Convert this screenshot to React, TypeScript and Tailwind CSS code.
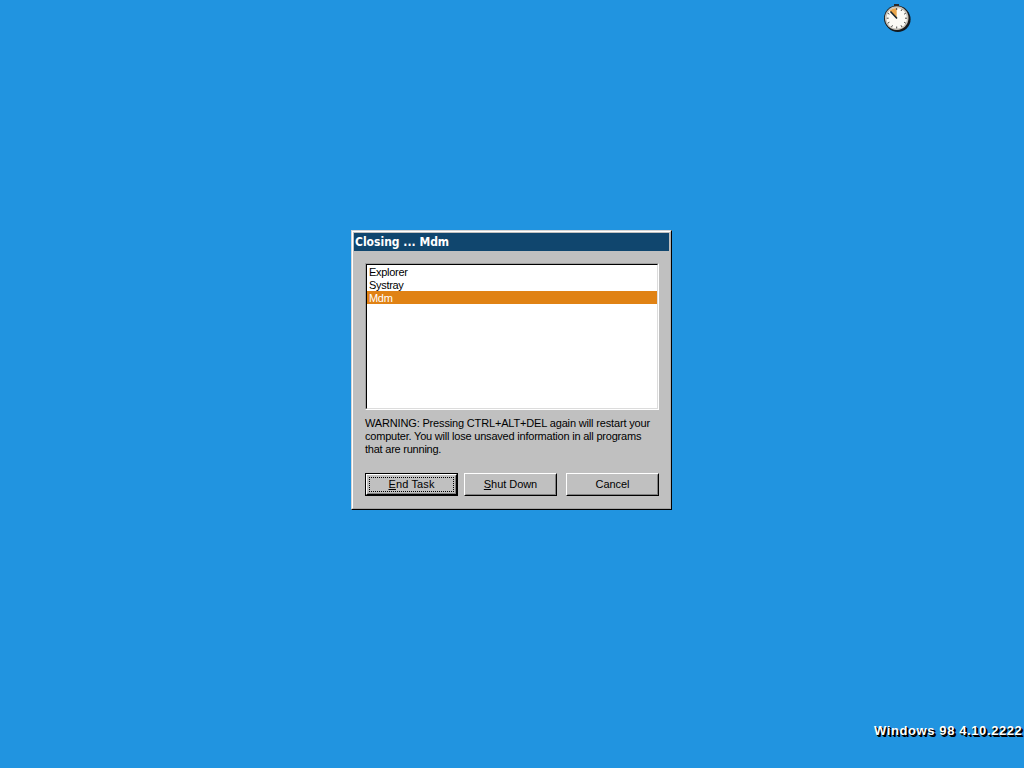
import type { ReactNode } from "react";

const tasks = ["Explorer", "Systray", "Mdm"];

const warning = [
  { text: "WARNING: Pressing CTRL+ALT+DEL again will restart your", spacing: "tracking-[-0.16px]" },
  { text: "computer. You will lose unsaved information in all programs", spacing: "tracking-[-0.21px]" },
  { text: "that are running.", spacing: "tracking-[-0.23px]" },
];

function ClockCursor() {
  return (
    <svg
      className="absolute left-[883px] top-[3px]"
      width="29"
      height="30"
      viewBox="0 0 29 30"
    >
      <circle cx="14.8" cy="16.2" r="12.8" fill="#101820" />
      <circle cx="13.8" cy="15.3" r="12.8" fill="#1c1c1c" />
      <circle cx="13.7" cy="15.1" r="11.8" fill="#c9c5bc" />
      <circle cx="13.7" cy="15.2" r="10.3" fill="#fbfaf5" />
      <path d="M13.7 15.2 L6.5 7.8 A10.3 10.3 0 0 1 13.7 4.9 Z" fill="#e9a54b" />
      <path d="M14 15.5 L7.5 8.5" stroke="#17242c" strokeWidth="1.6" />
      <path
        d="M13.7 5v2 M13.7 23.5v2 M3.6 15.2h2 M22 15.2h2 M19 6.3l-1 1.7 M22.8 10.2l-1.7 1 M22.8 20.2l-1.7-1 M19 24l-1-1.7 M8.5 24l1-1.7 M4.7 20.2l1.7-1 M4.7 10.2l1.7 1"
        stroke="#4b4b48"
        strokeWidth="1"
      />
      <path d="M11 1h5v2h-5z" fill="#292929" />
    </svg>
  );
}

function DialogButton({
  children,
  focused = false,
}: {
  children: ReactNode;
  focused?: boolean;
}) {
  return (
    <button
      type="button"
      className={[
        "w-[93px] h-[23px] text-[11px] leading-[13px] text-black",
        focused ? "border border-black tracking-[0.12px]" : "tracking-[-0.05px]",
      ].join(" ")}
    >
      <span className="flex w-full h-full border border-t-white border-l-white border-r-black border-b-black">
        <span
          className={[
            "flex-1 flex items-center justify-center border border-t-[#c0c0c0] border-l-[#c0c0c0] border-r-[#808080] border-b-[#808080]",
            focused ? "p-px" : "",
          ].join(" ")}
        >
          {focused ? (
            <span className="flex-1 h-full flex items-center justify-center border border-dotted border-black">
              <span>{children}</span>
            </span>
          ) : (
            <span>{children}</span>
          )}
        </span>
      </span>
    </button>
  );
}

export default function App() {
  return (
    <div className="relative w-[1024px] h-[768px] overflow-hidden bg-[#2194e0] font-['Liberation_Sans',Arial,sans-serif]">
      <ClockCursor />

      <div className="absolute left-[351px] top-[230px] w-[321px] h-[280px] border border-t-[#d4d4d4] border-l-[#d4d4d4] border-r-black border-b-black">
        <div className="w-full h-full flex flex-col bg-[#c0c0c0] border border-t-white border-l-white border-r-[#b0b0b0] border-b-[#a4a4a4] p-px">
          <div className="h-[18px] shrink-0 bg-[#10466e] pl-px text-white text-[12px] leading-[19px] font-bold whitespace-pre font-['DejaVu_Sans_Condensed','DejaVu_Sans',sans-serif]">
            Closing ... Mdm
          </div>

          <div className="flex flex-col pl-[11px] pt-3">
            <div className="w-[294px] h-[147px] border border-t-[#a0a0a0] border-l-[#a0a0a0] border-r-white border-b-white">
              <div className="w-full h-full bg-white border border-t-black border-l-black border-r-[#dcdcdc] border-b-[#dcdcdc]">
                {tasks.map((task) => (
                  <div
                    key={task}
                    className={[
                      "h-[13px] pl-0.5 text-[11px] leading-[15px] tracking-[-0.3px]",
                      task === "Mdm" ? "bg-[#e08214] text-white" : "text-black",
                    ].join(" ")}
                  >
                    {task}
                  </div>
                ))}
              </div>
            </div>

            <div className="mt-[7px] h-[39px] text-[11px] leading-[13px] text-black whitespace-nowrap">
              {warning.map((line) => (
                <p key={line.text} className={line.spacing}>
                  {line.text}
                </p>
              ))}
            </div>

            <div className="mt-[17px] flex">
              <DialogButton focused>
                <u>E</u>nd Task
              </DialogButton>
              <div className="ml-1.5 mr-[9px] flex">
                <DialogButton>
                  <u>S</u>hut Down
                </DialogButton>
              </div>
              <DialogButton>Cancel</DialogButton>
            </div>
          </div>
        </div>
      </div>

      <div className="absolute left-[874px] top-[723px] text-white text-[13px] leading-4 font-bold whitespace-nowrap tracking-[0.6px] [text-shadow:1px_1px_0_#000,2px_2px_0_#000]">
        Windows 98 4.10.2222
      </div>
    </div>
  );
}
